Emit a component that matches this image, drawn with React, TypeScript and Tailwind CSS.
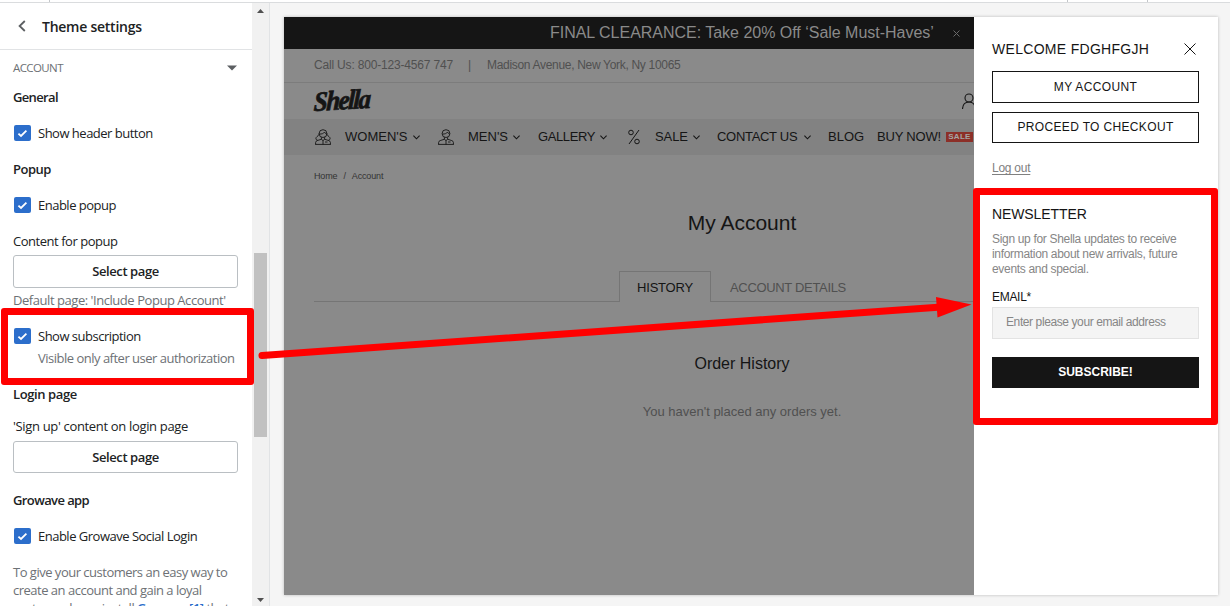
import React from 'react';

const SANS = "font-['Liberation_Sans',sans-serif]";

function Check({ label, className = '' }: { label: string; className?: string }) {
  return (
    <div className={`flex items-center ${className}`}>
      <span className="ml-px flex h-4 w-[17px] items-center justify-center rounded-[2px] bg-[#2c6ecb]">
        <svg width="11" height="9" viewBox="0 0 11 9" fill="none" stroke="#fff" strokeWidth="1.8">
          <path d="M1.400 4.600 4 7 9.400 1.600" />
        </svg>
      </span>
      <span className="ml-[7px] pt-0.5 tracking-[-0.5px]">{label}</span>
    </div>
  );
}

function SelectButton({ className = '' }: { className?: string }) {
  return (
    <button className={`w-[225px] rounded-[3px] border border-[#babfc3] bg-white pt-px text-center font-semibold text-[#202223] ${className}`}>
      <span className="text-[13px] tracking-[-0.4px]">Select page</span>
    </button>
  );
}

function Chevron() {
  return (
    <svg className="ml-1.5 shrink-0" width="7" height="5" viewBox="0 0 7 5" fill="none" stroke="#151515" strokeWidth="1.1">
      <path d="M.4.6 3.5 3.8 6.6.6" />
    </svg>
  );
}

function Person({ woman }: { woman?: boolean }) {
  return (
    <svg className="shrink-0" width="16" height="16" viewBox="0 0 16 16" fill="none" stroke="#151515" strokeWidth="0.9">
      <circle cx="8" cy="4.6" r="3.9" />
      <path d="M4.3 5c2.6.2 4.300-.5 5.200-1.900.4 1 1.200 1.600 2.200 1.900" />
      <path d="M6.400 8.300v2L8 11.600l1.600-1.300v-2M.6 15.400v-2c0-1.700 2.200-2 5.800-3.100M15.400 15.400v-2c0-1.700-2.200-2-5.800-3.100M.2 15.400h15.600M8 11.600v3.800M10 13h2.500" />
      {woman && <path d="M4.200 4.500c0 2.200-2 2.500-3 4-.8 1.200.2 2.600 1.500 2.800M11.800 4.500c0 2.200 2 2.500 3 4 .8 1.200-.2 2.600-1.500 2.800" />}
    </svg>
  );
}

function Sidebar() {
  return (
    <aside className="flex w-[270px] shrink-0 font-['Open_Sans','Noto_Sans',sans-serif] text-[13px] text-[#202223]">
      <div className="w-[252px] overflow-hidden bg-white">
        <div className="flex h-[47px] items-center border-b border-[#e1e3e5] pl-[18px]">
          <svg width="8" height="12" viewBox="0 0 8 12" fill="none" stroke="#5c5f62" strokeWidth="1.8">
            <path d="M6.800 1 1.600 6l5.200 5" />
          </svg>
          <h1 className="ml-4 pt-px text-sm font-semibold tracking-[-0.25px]">Theme settings</h1>
        </div>
        <div className="flex w-[260px] flex-col pl-[13px] whitespace-nowrap">
          <div className="flex h-9 w-[225px] items-center justify-between text-[#6d7175]">
            <span className="text-[11.500px] tracking-[-0.6px]">ACCOUNT</span>
            <svg className="mr-px" width="10" height="6" viewBox="0 0 10 6" fill="#5c5f62">
              <path d="M0 .5h10L5 5.500z" />
            </svg>
          </div>
          <h2 className="h-[22px] leading-[22px] font-semibold tracking-[-0.65px]">General</h2>
          <Check label="Show header button" className="h-[50px]" />
          <h2 className="h-[22px] leading-[22px] font-semibold tracking-[-0.5px]">Popup</h2>
          <Check label="Enable popup" className="h-[50px]" />
          <div className="h-[22px] leading-[22px] tracking-[-0.47px]">Content for popup</div>
          <SelectButton className="mt-[3px] h-[33px]" />
          <div className="h-6 leading-6 tracking-[-0.45px] text-[#6d7175]">Default page: 'Include Popup Account'</div>
          <Check label="Show subscription" className="mt-3.5 h-5" />
          <div className="mt-0.5 ml-[25px] h-5 leading-5 tracking-[-0.5px] text-[#6d7175]">Visible only after user authorization</div>
          <h2 className="mt-4 h-5 leading-5 font-semibold tracking-[-0.4px]">Login page</h2>
          <div className="mt-3 h-5 leading-5 tracking-[-0.33px]">'Sign up' content on login page</div>
          <SelectButton className="mt-[5px] h-8" />
          <h2 className="mt-[17px] h-5 leading-5 font-semibold tracking-[-0.6px]">Growave app</h2>
          <Check label="Enable Growave Social Login" className="mt-4 h-5" />
          <p className="mt-[17px] leading-[18px] tracking-[-0.5px] text-[#6d7175]">
            To give your customers an easy way to<br />
            create an account and gain a loyal<br />
            customer base, install <span className="font-semibold text-[#2c6ecb]">Growave[1]</span> that
          </p>
        </div>
      </div>
      <div className="flex w-[18px] flex-col items-center border-r border-[#e1e3e5] bg-[#f1f1f1]">
        <svg className="mt-1.5" width="7" height="4" viewBox="0 0 7 4" fill="#505050"><path d="M3.500 0 7 4H0z" /></svg>
        <div className="mt-[240px] h-[184px] w-[13px] bg-[#c1c1c1]" />
        <svg className="mt-auto mb-1" width="7" height="4" viewBox="0 0 7 4" fill="#505050"><path d="M0 0h7L3.500 4z" /></svg>
      </div>
    </aside>
  );
}

function Store() {
  return (
    <div className="flex w-[690px] shrink-0 flex-col overflow-hidden bg-[#8a8a8a] whitespace-nowrap text-[#151515]">
      <div className="flex h-8 shrink-0 items-center bg-[#151515] pl-[266px] text-[#8a8a8a]">
        <span className="w-[383px] text-[16px] tracking-[-0.02px]">FINAL CLEARANCE: Take 20% Off ‘Sale Must-Haves’</span>
        <svg className="ml-5" width="7" height="7" viewBox="0 0 7 7" stroke="#6a6a6a"><path d="M.5.5l6 6M6.500.5l-6 6" /></svg>
      </div>
      <div className="flex h-[34px] shrink-0 items-center border-b border-[#7c7c7c] pb-0.5 pl-[30px] text-[12px] text-[#505050]">
        <span className="w-[138px] tracking-[-0.18px]">Call Us: 800-123-4567 747</span>
        <span className="ml-4 w-[19px]">|</span>
        <span className="tracking-[-0.31px]">Madison Avenue, New York, Ny 10065</span>
      </div>
      <div className="flex h-9 shrink-0 items-center pl-[30px]">
        <span className="w-[57px] origin-left -rotate-3 -skew-x-6 scale-y-110 font-['Liberation_Serif',serif] text-[25px] leading-none font-bold tracking-[-1.6px] italic [-webkit-text-stroke:0.7px_#151515]">Shella</span>
        <svg className="ml-[592px] shrink-0" width="12" height="17" viewBox="0 0 12 17" fill="none" stroke="#151515" strokeWidth="1.100">
          <circle cx="7" cy="5" r="4" />
          <path d="M.5 16c.2-4 2.500-7 6.500-7s6 2 6.500 7" />
        </svg>
      </div>
      <nav className="flex h-9 shrink-0 items-center bg-[#828282] pl-[31px] text-[13px]">
        <Person woman />
        <span className="ml-3.5 w-[62px]">WOMEN'S</span><Chevron />
        <span className="ml-[18px] flex"><Person /></span>
        <span className="ml-3.5 w-[39px]">MEN'S</span><Chevron />
        <span className="ml-[18px] w-14 tracking-[-0.4px]">GALLERY</span><Chevron />
        <svg className="ml-[21px] shrink-0" width="12" height="16" viewBox="0 0 12 16" fill="none" stroke="#151515">
          <circle cx="3" cy="3.500" r="2.300" /><circle cx="9" cy="12.500" r="2.300" /><path d="M11 1 1 15" />
        </svg>
        <span className="ml-[15px] w-8 tracking-[-0.1px]">SALE</span><Chevron />
        <span className="ml-[17px] w-[81px] tracking-[-0.300px]">CONTACT US</span><Chevron />
        <span className="ml-[17px] w-9">BLOG</span>
        <span className="ml-[13px] w-[63px] tracking-[-0.2px]">BUY NOW!</span>
        <span className="ml-1.5 h-[10px] w-[27px] shrink-0 bg-[#8c2f28] text-center text-[8px] leading-[10px] font-bold tracking-[0.3px] text-[#a5a5a5]">SALE</span>
      </nav>
      <div className="mt-[15px] h-3 pl-[30px] text-[9px] leading-3 tracking-[-0.15px] text-[#333]">
        <span>Home</span><span className="mx-1.5">/</span><span>Account</span>
      </div>
      <main className="ml-[30px] flex w-[856px] flex-col items-center">
        <h1 className="mt-[27px] h-7 text-[21px] leading-7">My Account</h1>
        <div className="mt-[34px] flex h-[31px] w-full text-[13px]">
          <div className="w-[305px] border-b border-[#757575]" />
          <div className="w-[92px] border border-b-0 border-[#757575] text-center leading-8 tracking-[-0.2px]">HISTORY</div>
          <div className="flex-1 border-b border-[#757575] pl-[19px] leading-[34px] tracking-[-0.33px] text-[#505050]">ACCOUNT DETAILS</div>
        </div>
        <h2 className="mt-[50px] h-6 text-[16px] leading-6">Order History</h2>
        <p className="mt-[26px] h-5 text-[13px] leading-5 text-[#505050]">You haven't placed any orders yet.</p>
      </main>
    </div>
  );
}

function Drawer() {
  return (
    <div className="flex w-[244px] flex-col bg-white pr-[19px] pl-[18px] whitespace-nowrap text-[#151515]">
      <div className="mt-[22px] flex h-5 items-center justify-between">
        <h2 className="text-[14px] tracking-[0.3px]">WELCOME FDGHFGJH</h2>
        <svg className="mr-[3px]" width="12" height="12" viewBox="0 0 12 12" stroke="#151515"><path d="M.5.5l11 11M11.500.5l-11 11" /></svg>
      </div>
      <button className="mt-3 h-8 border border-[#151515] text-[12px] tracking-[0.35px]">MY ACCOUNT</button>
      <button className="mt-[9px] h-[31px] border border-[#151515] pb-0.5 text-[12px] tracking-[0.35px]">PROCEED TO CHECKOUT</button>
      <a className="mt-[15px] h-5 self-start text-[12px] leading-5 tracking-[-0.25px] text-[#808080] underline underline-offset-2">Log out</a>
      <h2 className="mt-7 h-[17px] text-[14px] leading-[17px] tracking-[-0.1px]">NEWSLETTER</h2>
      <p className="mt-[9px] text-[12px] leading-[15px] tracking-[-0.32px] text-[#868686]">
        Sign up for Shella updates to receive<br />information about new arrivals, future<br />events and special.
      </p>
      <label className="mt-3 h-4 text-[12px] leading-4 tracking-[-0.3px]">EMAIL*</label>
      <div className="mt-[2px] h-8 border border-[#e3e3e3] bg-[#f4f4f4] pl-[13px] text-[12px] leading-[29px] tracking-[-0.4px] text-[#868686]">Enter please your email address</div>
      <button className="mt-[18px] h-[31px] bg-[#151515] pb-0.5 text-[12px] font-bold text-white">SUBSCRIBE!</button>
    </div>
  );
}

export default function App() {
  return (
    <div className="relative flex h-[606px] w-[1230px] flex-col overflow-hidden bg-[#f5f5f5]">
      <div className="flex h-[3px] shrink-0 border-b border-[#dadcde] bg-white">
        <span className="ml-[49px] w-px bg-[#c4c7ca]" />
        <span className="ml-[1017px] w-px bg-[#c4c7ca]" />
        <span className="ml-[79px] w-px bg-[#c4c7ca]" />
      </div>
      <div className="flex min-h-0 flex-1">
        <Sidebar />
        <div className={`mt-3.5 ml-3.5 flex h-[578px] w-[934px] shadow-[0_0_3px_rgba(0,0,0,0.25)] ${SANS}`}>
          <Store />
          <Drawer />
        </div>
      </div>
      <div className="absolute top-[308px] left-[1px] h-[77px] w-[253px] rounded-[3px] border-[7px] border-[#f00]" />
      <div className="absolute top-[188px] left-[973px] h-[237px] w-[245px] rounded-[3px] border-[7px] border-[#f00]" />
      <svg className="absolute top-0 left-0" width="1230" height="606" viewBox="0 0 1230 606">
        <path d="M262 355.500 938 307.200" stroke="#f00" strokeWidth="7" strokeLinecap="round" />
        <path d="M936 297 971.500 304.500 937.500 317.500z" fill="#f00" />
      </svg>
    </div>
  );
}
